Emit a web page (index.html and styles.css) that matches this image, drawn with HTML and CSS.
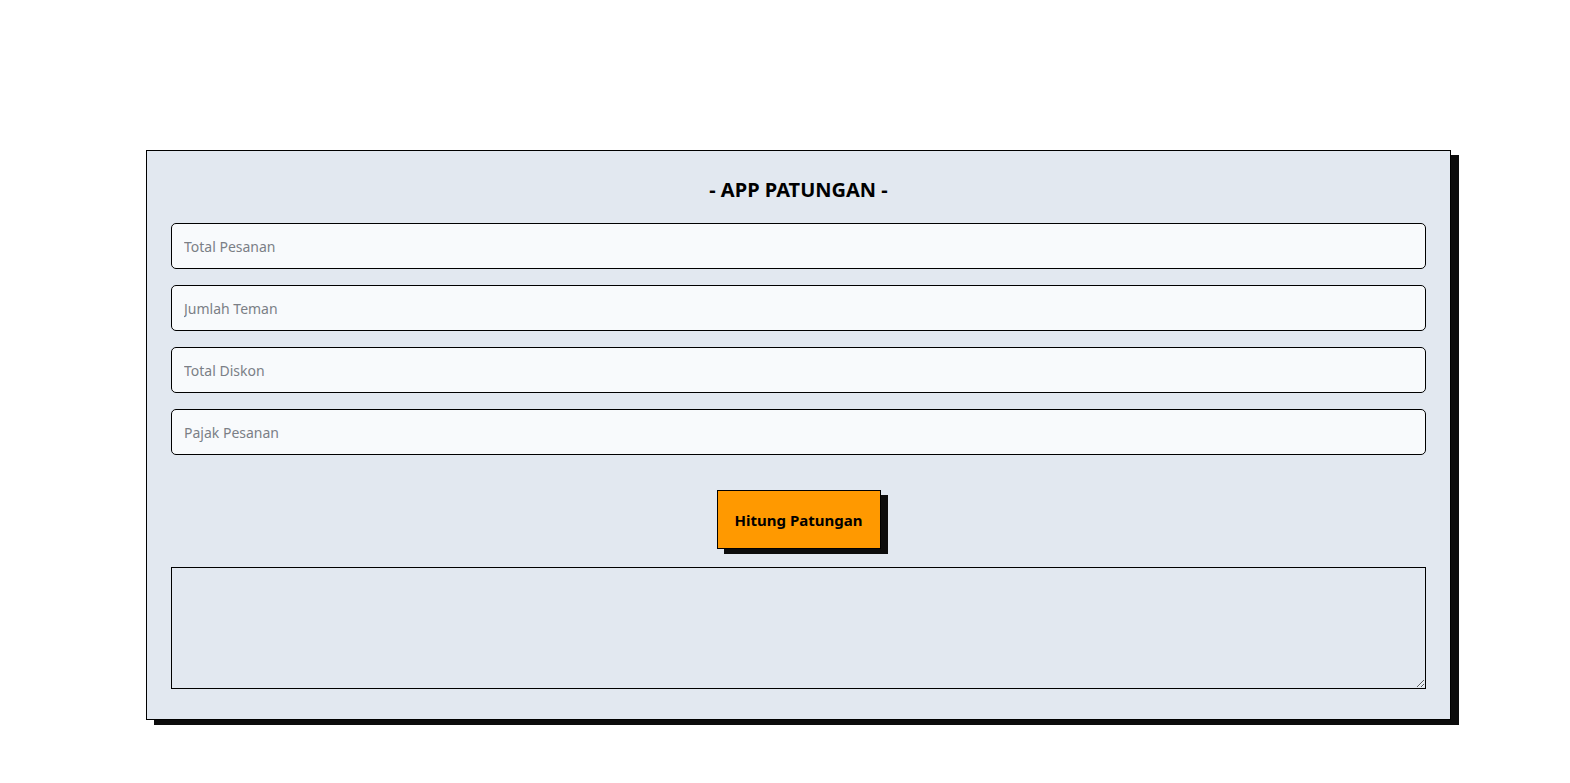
FILE: index.html
```html
<!DOCTYPE html>
<html>
<head>
<meta charset="utf-8">
<link rel="stylesheet" href="styles.css">
</head>
<body>
<div class="page">
  <div class="card">
    <h1 class="title">- APP PATUNGAN -</h1>
    <form class="form">
      <input class="field" type="text" placeholder="Total Pesanan">
      <input class="field" type="text" placeholder="Jumlah Teman">
      <input class="field" type="text" placeholder="Total Diskon">
      <input class="field" type="text" placeholder="Pajak Pesanan">
      <div class="actions">
        <button class="btn" type="button">Hitung Patungan</button>
      </div>
      <textarea class="result"></textarea>
    </form>
  </div>
</div>
</body>
</html>
```
FILE: styles.css
```css
* { box-sizing: border-box; }
html, body { margin: 0; padding: 0; background: #ffffff; }
body { font-family: "Noto Sans", "Open Sans", sans-serif; color: #000; }
.page { padding: 150px 119px 60px 146px; }
.card {
  background: #e2e8f0;
  border: 1px solid #000;
  box-shadow: 8px 5px 0 #0c0c0c;
  padding: 24px 24px 30px 24px;
  height: 570px;
}
.title {
  margin: 0 0 22px 0;
  text-align: center;
  font-size: 20px;
  font-weight: 700;
  line-height: 28px;
  position: relative;
  top: 1px;
}
.form { display: flex; flex-direction: column; margin-top: -2px; }
.field {
  height: 46px;
  border: 1px solid #000;
  border-radius: 5px;
  background: #f8fafc;
  padding: 0 12px;
  font-family: inherit;
  font-size: 14px;
  margin-bottom: 16px;
  outline: none;
}
.field::placeholder { color: #7b7f86; }
.actions { display: flex; justify-content: center; margin-top: 19px; margin-bottom: 18px; }
.btn {
  width: 164px;
  height: 59px;
  background: #ff9900;
  border: 1px solid #000;
  border-radius: 0;
  box-shadow: 7px 5px 0 #0c0c0c;
  font-family: inherit;
  font-size: 15px;
  font-weight: 700;
  color: #000;
  cursor: pointer;
}
.result {
  display: block;
  height: 122px;
  border: 1px solid #000;
  background: transparent;
  resize: vertical;
  font-family: inherit;
}
```
